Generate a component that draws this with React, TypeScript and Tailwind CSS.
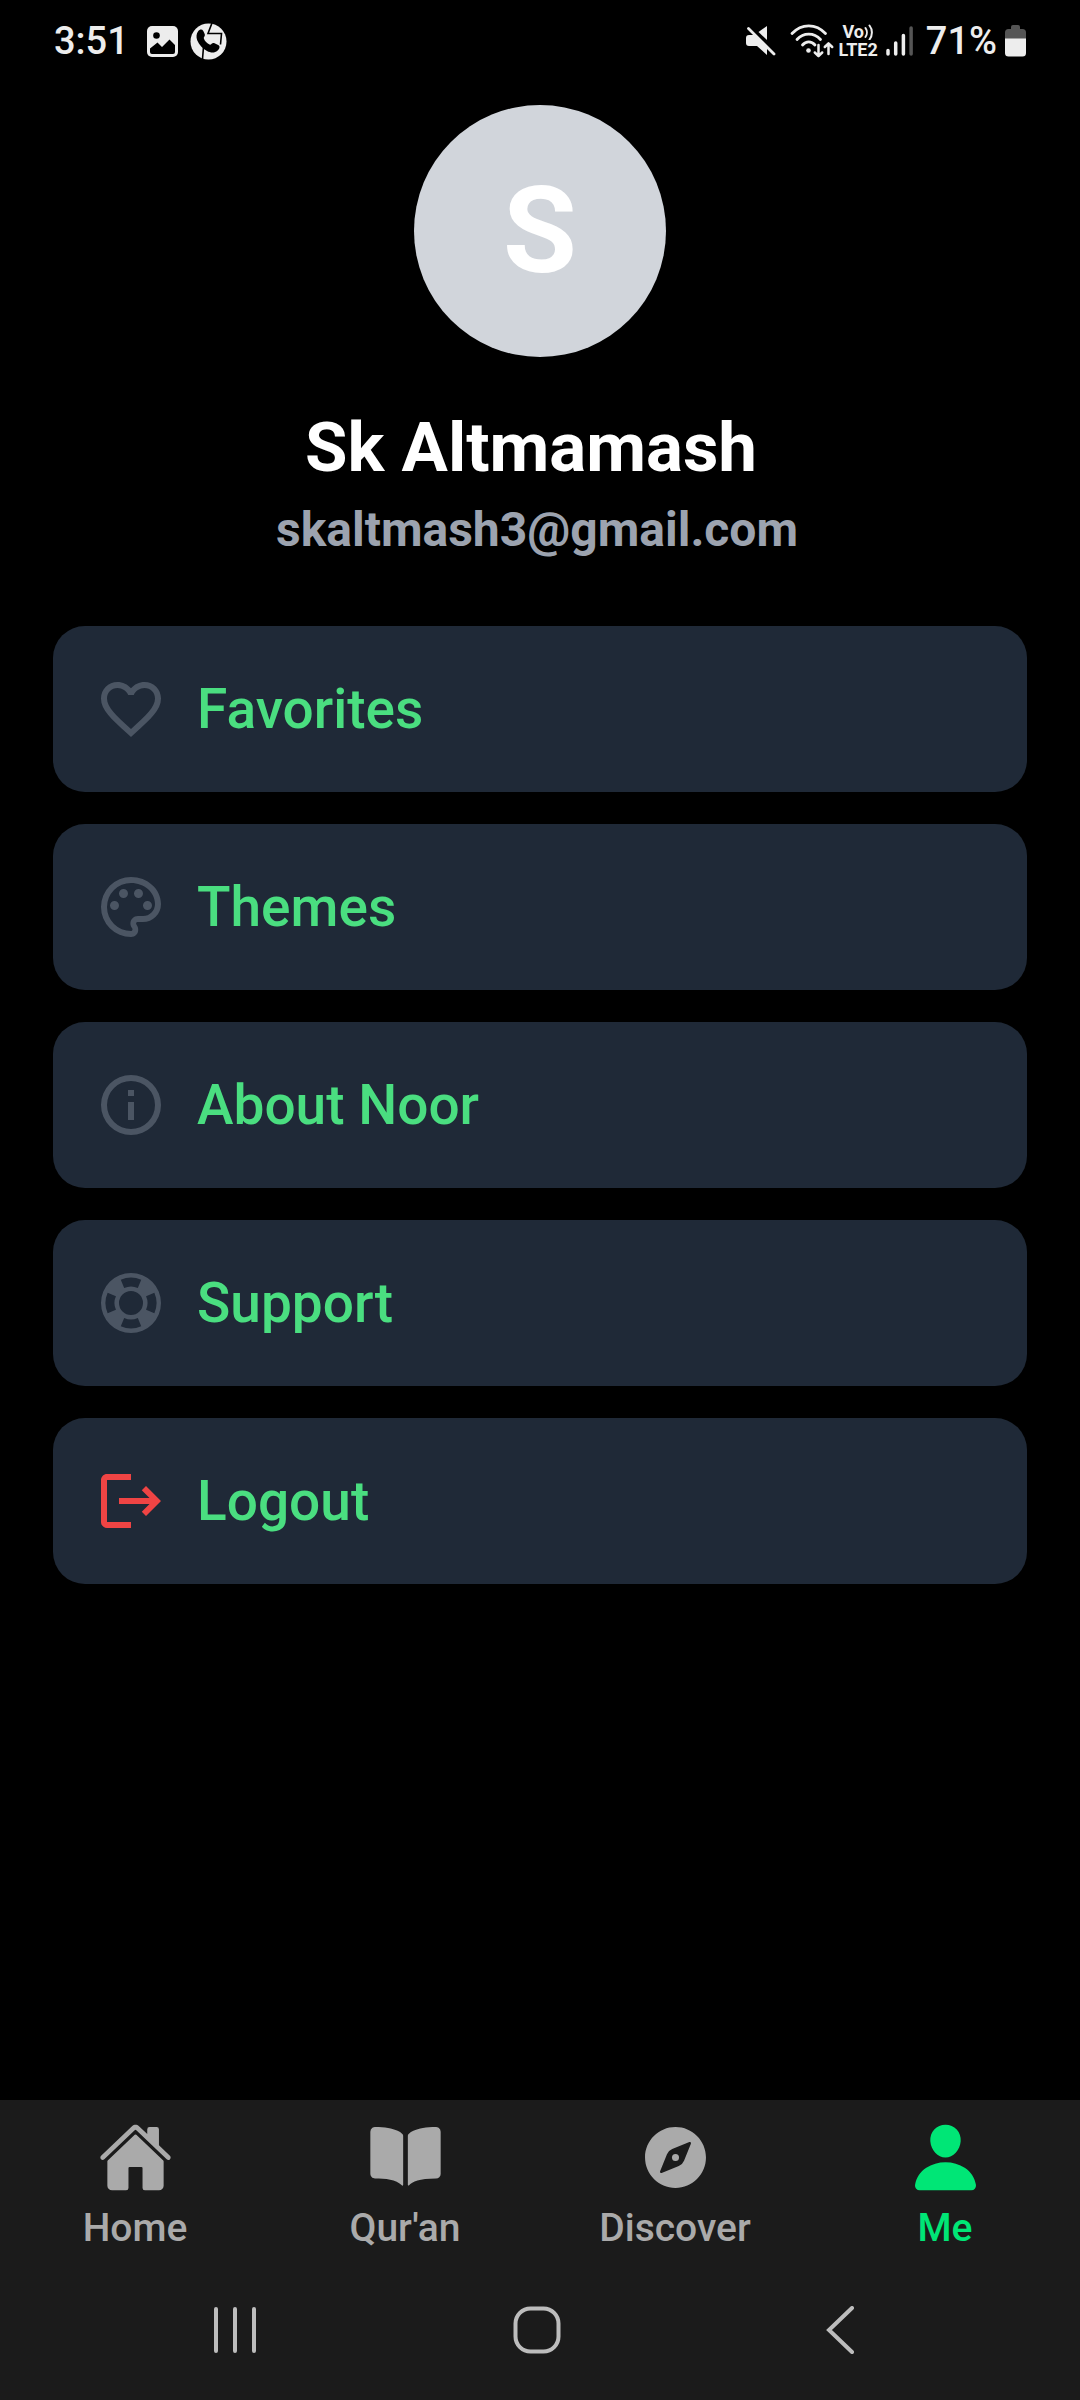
import React from "react";
import { IoBook, IoCompass, IoHome, IoPerson } from "react-icons/io5";

type IconProps = { className?: string };

function MaterialIcon({ d, className }: { d: string; className: string }) {
  return (
    <svg viewBox="0 0 24 24" className={`size-18 shrink-0 ${className}`} fill="currentColor" fillRule="evenodd" aria-hidden="true">
      <path d={d} />
    </svg>
  );
}

const HEART =
  "M12.1 18.55l-.1.1-.11-.1C7.14 14.24 4 11.39 4 8.5 4 6.5 5.5 5 7.5 5c1.54 0 3.04 1 3.57 2.36h1.86C13.46 6 14.96 5 16.5 5c2 0 3.5 1.5 3.5 3.5 0 2.89-3.14 5.74-7.9 10.05M16.5 3c-1.74 0-3.41.81-4.5 2.08C10.91 3.81 9.24 3 7.5 3 4.42 3 2 5.41 2 8.5c0 3.77 3.4 6.86 8.55 11.53L12 21.35l1.45-1.32C18.6 15.36 22 12.27 22 8.5 22 5.41 19.58 3 16.5 3z";
const PALETTE =
  "M12 22A10 10 0 0 1 2 12 10 10 0 0 1 12 2c5.5 0 10 4 10 9a6 6 0 0 1-6 6h-1.8c-.3 0-.5.2-.5.5 0 .1.1.2.1.3.4.5.6 1.1.6 1.7.1 1.4-1 2.5-2.4 2.5zM12 4a8 8 0 0 0-8 8 8 8 0 0 0 8 8c.3 0 .5-.2.5-.5 0-.2-.1-.3-.1-.4-.4-.5-.6-1-.6-1.6 0-1.4 1.1-2.5 2.5-2.5H16a4 4 0 0 0 4-4c0-3.9-3.6-7-8-7zM6.5 10a1.5 1.5 0 1 1 0 3 1.5 1.5 0 0 1 0-3zm3-4a1.5 1.5 0 1 1 0 3 1.5 1.5 0 0 1 0-3zm5 0a1.5 1.5 0 1 1 0 3 1.5 1.5 0 0 1 0-3zm3 4a1.5 1.5 0 1 1 0 3 1.5 1.5 0 0 1 0-3z";
const INFO =
  "M12 2a10 10 0 1 0 0 20 10 10 0 0 0 0-20zm0 2a8 8 0 1 1 0 16 8 8 0 0 1 0-16zM11 7h2v2h-2zm0 4h2v6h-2z";
const LIFEBUOY =
  "M12 2a10 10 0 1 0 0 20 10 10 0 0 0 0-20zM12 8a4 4 0 1 1 0 8 4 4 0 0 1 0-8zM8.59 4.21A8.5 8.5 0 0 1 15.41 4.21L14.27 6.98A5.5 5.5 0 0 0 9.73 6.98zM19.79 8.59A8.5 8.5 0 0 1 19.79 15.41L17.02 14.27A5.5 5.5 0 0 0 17.02 9.73zM15.41 19.79A8.5 8.5 0 0 1 8.59 19.79L9.73 17.02A5.5 5.5 0 0 0 14.27 17.02zM4.21 15.41A8.5 8.5 0 0 1 4.21 8.59L6.98 9.73A5.5 5.5 0 0 0 6.98 14.27z";
const LOGOUT =
  "M17 7l-1.41 1.41L18.17 11H8v2h10.17l-2.58 2.58L17 17l5-5zM4 5h8V3H4c-1.1 0-2 .9-2 2v14c0 1.1.9 2 2 2h8v-2H4z";

const menu = [
  { label: "Favorites", d: HEART, color: "text-[#4b5563]" },
  { label: "Themes", d: PALETTE, color: "text-[#4b5563]" },
  { label: "About Noor", d: INFO, color: "text-[#4b5563]" },
  { label: "Support", d: LIFEBUOY, color: "text-[#4b5563]" },
  { label: "Logout", d: LOGOUT, color: "text-[#ef4444]" },
];

const tabs = [
  { label: "Home", Icon: IoHome },
  { label: "Qur'an", Icon: IoBook },
  { label: "Discover", Icon: IoCompass },
  { label: "Me", Icon: IoPerson, active: true },
];

function PictureIcon({ className }: IconProps) {
  return (
    <svg viewBox="0 0 31 31" className={className} aria-hidden="true">
      <rect width="31" height="31" rx="5" fill="#ededed" />
      <circle cx="9.5" cy="9.5" r="3.3" fill="#000" />
      <path d="M3 22.5l7.5-6 4.5 4.5 7.5-7.5 5.5 5.5V26q0 2-2 2H5q-2 0-2-2z" fill="#000" />
    </svg>
  );
}

function CallIcon({ className }: IconProps) {
  return (
    <svg viewBox="0 0 37 37" className={className} aria-hidden="true">
      <circle cx="18.5" cy="18.5" r="18" fill="#ededed" />
      <path d="M22 0l-4 10.5h13.5l-1 11M12.5 36l1-12" fill="none" stroke="#000" strokeWidth="1.6" />
      <path d="M8 8.5c1.8-2.4 4-2.6 5.3-.6l1.4 3c.8 1.8-.9 2.8-1 4.1.9 3.2 3.2 5.5 6.3 6.7 1.6 0 2-2.2 4-1.6l4.2 1.8c2.2 1.1 1.5 3.8-.8 5.9-2.3 2.1-6.3 2.5-10.4.3-4.2-2.3-8-6.3-9.8-10.8-1.2-3.3-.8-6.7.8-8.8z" fill="#000" />
    </svg>
  );
}

function MutedIcon({ className }: IconProps) {
  return (
    <svg viewBox="0 0 30 30" className={className} fill="#ededed" aria-hidden="true">
      <path d="M0 12q0-3 3-3h6l12 12v8L11 20H3q-3 0-3-3z" />
      <path d="M12.5 6L21 0v14z" />
      <path d="M2.5 2.5L28 28" stroke="#ededed" strokeWidth="2.8" strokeLinecap="round" />
    </svg>
  );
}

function WifiIcon({ className }: IconProps) {
  return (
    <svg viewBox="0 0 44 34" className={className} fill="none" stroke="#ededed" strokeWidth="2.8" strokeLinecap="round" aria-hidden="true">
      <path d="M2 9.5C11.5-.8 26-.8 35.5 9.5M7 15.5c6.5-7.3 17-7.3 23.5 0M12.5 21c3.5-4.2 9-4.2 12.5 0" />
      <circle cx="18.5" cy="26.5" r="2.3" fill="#ededed" stroke="none" />
      <g strokeWidth="2.5" strokeLinejoin="round">
        <path d="M28.5 21v11M24.8 28.5l3.7 3.7 3.7-3.7M38.5 30V19.5M34.8 23l3.7-3.7 3.7 3.7" />
      </g>
    </svg>
  );
}

function SignalIcon({ className }: IconProps) {
  return (
    <svg viewBox="0 0 28 30" className={className} strokeWidth="3.5" strokeLinecap="round" aria-hidden="true">
      <path d="M2 24.5v3.5M9.7 17v11M17.4 9.5V28" stroke="#ededed" />
      <path d="M25.1 2v26" stroke="#555" />
    </svg>
  );
}

function BatteryIcon({ className }: IconProps) {
  return (
    <svg viewBox="0 0 21 32" className={className} aria-hidden="true">
      <path d="M6 2q0-2 2-2h5q2 0 2 2v2h2.5Q21 4 21 7.5V14H0V7.5Q0 4 3.5 4H6z" fill="#555" />
      <path d="M0 13.5h21V28q0 3.5-3.5 3.5h-14Q0 31.5 0 28z" fill="#ededed" />
    </svg>
  );
}

function StatusBar() {
  return (
    <header className="flex h-[82px] shrink-0 items-center justify-between px-[54px] text-[38px] leading-none font-medium text-[#ededed]">
      <div className="flex items-center">
        <span>3:51</span>
        <PictureIcon className="ml-[18px] size-[31px]" />
        <CallIcon className="ml-3 size-[37px]" />
      </div>
      <div className="flex items-center">
        <MutedIcon className="size-[30px]" />
        <WifiIcon className="ml-[14px] h-[34px] w-[44px]" />
        <div className="ml-1 flex flex-col items-center text-[18px] leading-[18px] font-bold">
          <span className="flex items-center">
            Vo
            <svg viewBox="0 0 10 16" className="h-4 w-[10px]" fill="none" stroke="#ededed" strokeWidth="2" strokeLinecap="round" aria-hidden="true">
              <path d="M1.5 4c1.8 2.5 1.8 6.5 0 9M5.5 1.5c3.2 4 3.2 10 0 14" />
            </svg>
          </span>
          <span>LTE2</span>
        </div>
        <SignalIcon className="ml-2 h-[30px] w-[28px]" />
        <span className="ml-3">71%</span>
        <BatteryIcon className="ml-2 h-[32px] w-[21px]" />
      </div>
    </header>
  );
}

function Profile() {
  return (
    <section className="flex flex-col items-center pt-[23px]">
      <div className="flex size-[252px] items-center justify-center rounded-full bg-[#d1d5db] text-[120px] leading-none font-bold text-white">
        S
      </div>
      <h1 className="mt-[49px] pr-[18px] text-[69px] leading-[84px] font-bold text-white">Sk Altmamash</h1>
      <p className="mt-2 pr-[6px] text-[48px] leading-[64px] font-bold text-[#9ca3af]">skaltmash3@gmail.com</p>
    </section>
  );
}

function Menu() {
  return (
    <ul className="mt-16 flex flex-col gap-8 px-[53px]">
      {menu.map(({ label, d, color }) => (
        <li key={label}>
          <button type="button" className="flex h-[166px] w-full items-center gap-[30px] rounded-[32px] bg-[#1f2937] px-[42px] text-left">
            <MaterialIcon d={d} className={color} />
            <span className="text-[55px] leading-[72px] font-medium text-[#4ade80]">{label}</span>
          </button>
        </li>
      ))}
    </ul>
  );
}

function TabBar() {
  return (
    <nav className="grid grid-cols-4 pt-5 pb-[6px]">
      {tabs.map(({ label, Icon, active }) => (
        <a
          key={label}
          href="#"
          aria-current={active ? "page" : undefined}
          className={`flex flex-col items-center text-[39px] leading-[50px] font-medium ${active ? "text-[#00e676]" : "text-[#aaaaaa]"}`}
        >
          <Icon className="size-[75px]" />
          <span className="mt-2">{label}</span>
        </a>
      ))}
    </nav>
  );
}

function SystemBar() {
  const stroke = { fill: "none", stroke: "#bdbdbd", strokeWidth: 4, strokeLinecap: "round" as const };
  return (
    <div className="grid h-[141px] grid-cols-3 items-center pr-[90px] pl-[84px]">
      <button type="button" aria-label="Recent apps" className="flex justify-center">
        <svg viewBox="0 0 48 48" className="size-12" {...stroke}>
          <path d="M5 3v42M24 3v42M43 3v42" />
        </svg>
      </button>
      <button type="button" aria-label="Home" className="flex justify-center">
        <svg viewBox="0 0 48 48" className="size-12" {...stroke}>
          <rect x="2.5" y="2.5" width="43" height="43" rx="15" />
        </svg>
      </button>
      <button type="button" aria-label="Back" className="flex justify-center">
        <svg viewBox="0 0 48 48" className="size-12" {...stroke}>
          <path d="M37 2L14 24l23 22" />
        </svg>
      </button>
    </div>
  );
}

export default function App() {
  return (
    <div className="flex min-h-screen flex-col bg-black font-['Roboto',sans-serif]">
      <StatusBar />
      <main className="flex-1">
        <Profile />
        <Menu />
      </main>
      <footer className="bg-[#1b1b1b]">
        <TabBar />
        <SystemBar />
      </footer>
    </div>
  );
}
